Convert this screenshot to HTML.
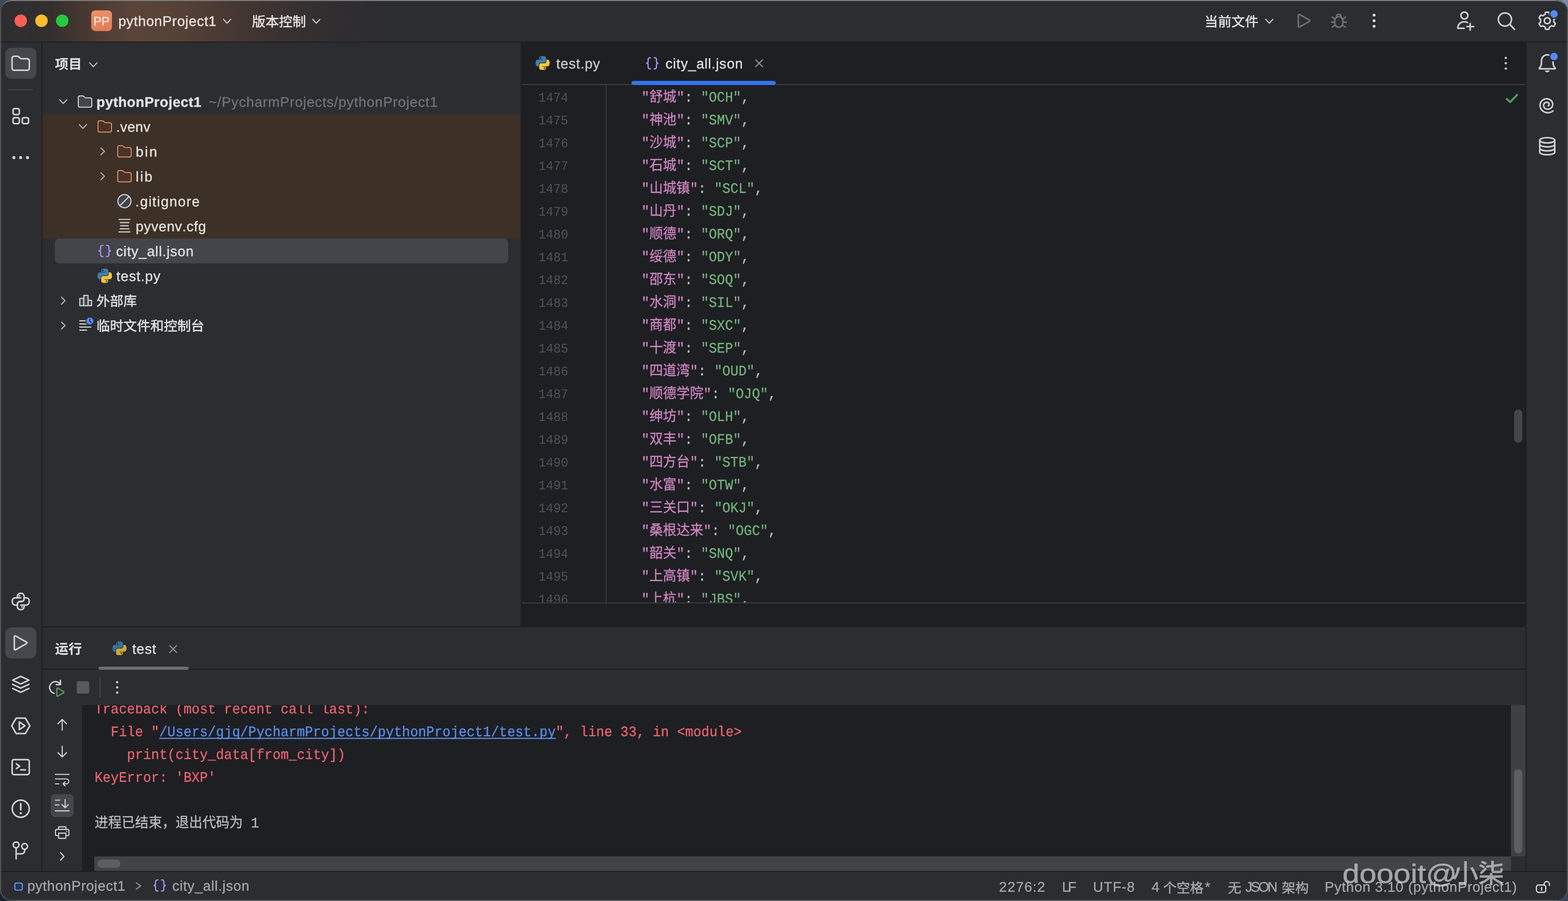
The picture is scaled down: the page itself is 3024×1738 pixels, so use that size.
<!DOCTYPE html>
<html lang="zh"><head><meta charset="utf-8"><title>pythonProject1 – city_all.json</title>
<style>
html,body{margin:0;padding:0;background:#15171a}
body{width:3024px;height:1738px;position:relative;overflow:hidden;font-family:"Liberation Sans","Noto Sans CJK SC",sans-serif;font-kerning:none;text-rendering:geometricPrecision;-webkit-font-smoothing:antialiased}
.a{position:absolute;display:block}
.t{position:absolute;white-space:pre;-webkit-text-stroke:0.35px}
svg text{font-family:"Liberation Sans","Noto Sans CJK SC",sans-serif}
#win{position:absolute;left:0;top:0;width:3024px;height:1738px;border-radius:22px;overflow:hidden;background:#2b2d30;will-change:transform}
#win:after{content:"";position:absolute;left:0;top:0;right:0;bottom:0;border-radius:22px;border:2px solid #56575b;border-top-color:#7c7b7c;pointer-events:none;z-index:50}
#titlebar{background:linear-gradient(90deg,#2e2e30 0,#342f2e 100px,#43372f 150px,#503e35 200px,#5a4439 260px,#574237 330px,#4e3c34 400px,#423531 480px,#383131 560px,#312e30 640px,#2d2d30 720px,#2b2d30 800px)}
.cl,.ln{position:absolute;white-space:pre;font-family:"Liberation Mono","Noto Sans CJK SC",monospace;font-size:26px;line-height:44px;transform:scaleY(1.065)}
.cl{color:#bcbec4;-webkit-text-stroke:0.3px}
.ln{color:#4d525b;font-size:24px}
.k,.q{color:#cf86c3}.s{color:#73b27d}.p{color:#bcbec4}
.lk{color:#5a8ff0;text-decoration:underline;text-decoration-thickness:1.6px;text-underline-offset:2.5px;text-decoration-skip-ink:none}
</style></head>
<body>
<div class="a" style="left:0px;top:0px;width:40px;height:40px;background:#3b4a56;"></div>
<div class="a" style="left:2984px;top:0px;width:40px;height:40px;background:#7f88a3;"></div>
<div class="a" style="left:0px;top:1698px;width:40px;height:40px;background:#1a222e;"></div>
<div class="a" style="left:2984px;top:1698px;width:40px;height:40px;background:#3a4757;"></div>
<div id="win">
<div class="a" id="titlebar" style="left:0;top:0;width:3024px;height:80px"></div>
<div class="a" style="left:28px;top:28px;width:24px;height:24px;border-radius:50%;background:#fe5f57"></div>
<div class="a" style="left:68px;top:28px;width:24px;height:24px;border-radius:50%;background:#febc2e"></div>
<div class="a" style="left:108px;top:28px;width:24px;height:24px;border-radius:50%;background:#28c840"></div>
<div class="a" style="left:176px;top:20px;width:40px;height:40px;border-radius:8px;background:linear-gradient(170deg,#ee9169 0%,#e8855f 50%,#e07a59 100%)"></div>
<div class="t" style="left:180.37px;top:25.35px;font-size:23.5px;line-height:33px;color:#fbeee8;letter-spacing:-0.382px;-webkit-text-stroke:0.1px;">PP</div>
<div class="t" style="left:228.16px;top:22.14px;font-size:27px;line-height:38px;color:#ebe5e1;letter-spacing:0.680px;">pythonProject1</div>
<svg class="a" style="left:426px;top:28.5px;" width="24" height="24" viewBox="0 0 24 24"><path d="M5 8.2L12 15.8L19 8.2" fill="none" stroke="#c3c5cb" stroke-width="2.2" stroke-linecap="round" stroke-linejoin="round" /></svg>
<svg class="a" style="left:485.60px;top:27.72px;overflow:visible" width="104.00" height="28.60" viewBox="0 0 104.00 28.60" fill="#e7e3e2" stroke="#e7e3e2" stroke-width="0.5"><text x="0" y="22.88" font-size="26">版本控制</text></svg>
<svg class="a" style="left:598px;top:28.5px;" width="24" height="24" viewBox="0 0 24 24"><path d="M5 8.2L12 15.8L19 8.2" fill="none" stroke="#c3c5cb" stroke-width="2.2" stroke-linecap="round" stroke-linejoin="round" /></svg>
<svg class="a" style="left:2323.20px;top:27.52px;overflow:visible" width="104.00" height="28.60" viewBox="0 0 104.00 28.60" fill="#dfe1e5" stroke="#dfe1e5" stroke-width="0.5"><text x="0" y="22.88" font-size="26">当前文件</text></svg>
<svg class="a" style="left:2436px;top:29px;" width="24" height="24" viewBox="0 0 24 24"><path d="M5 8.2L12 15.8L19 8.2" fill="none" stroke="#c3c5cb" stroke-width="2.2" stroke-linecap="round" stroke-linejoin="round" /></svg>
<svg class="a" style="left:2494px;top:20px;" width="40" height="40" viewBox="0 0 40 40"><path d="M9.900 9.400c0-1.200 1.300-1.900 2.300-1.300l19.200 10.600c1 .6 1 2 0 2.600L12.200 31.900c-1 .6-2.300-.100-2.300-1.300z" fill="none" stroke="#6c6e75" stroke-width="3" stroke-linecap="round" stroke-linejoin="round" /></svg>
<svg class="a" style="left:2562px;top:20px;" width="40" height="40" viewBox="0 0 40 40"><ellipse cx="20" cy="22.300" rx="8.300" ry="10.300" fill="none" stroke="#6c6e75" stroke-width="3" stroke-linecap="round" stroke-linejoin="round" /><path d="M15.200 12.800a4.800 5.400 0 0 1 9.600 0" fill="none" stroke="#6c6e75" stroke-width="3" stroke-linecap="round" stroke-linejoin="round" /><path d="M12.400 16.400L7.400 13.200M12 22.800H5.800M12.600 29L7.400 32.200M27.600 16.400L32.600 13.200M28 22.800H34.200M27.400 29L32.600 32.200" fill="none" stroke="#6c6e75" stroke-width="3" stroke-linecap="round" stroke-linejoin="round" /></svg>
<svg class="a" style="left:2640px;top:20px;" width="20" height="40" viewBox="0 0 20 40"><circle cx="10" cy="9.2" r="2.7" fill="#dfe1e5"/><circle cx="10" cy="20" r="2.7" fill="#dfe1e5"/><circle cx="10" cy="30.8" r="2.7" fill="#dfe1e5"/></svg>
<svg class="a" style="left:2808px;top:20px;" width="44" height="44" viewBox="0 0 44 44"><circle cx="16.200" cy="9.900" r="6.700" fill="none" stroke="#ced0d6" stroke-width="3" stroke-linecap="round" stroke-linejoin="round" /><path d="M15.700 34.400H3.400c0-7.400 5.600-12.400 12.800-12.400 2.200 0 4.200.500 5.800 1.400" fill="none" stroke="#ced0d6" stroke-width="3" stroke-linecap="round" stroke-linejoin="round" /><path d="M20.900 31.300H34.100M27.300 25.200V37.900" fill="none" stroke="#ced0d6" stroke-width="3" stroke-linecap="round" stroke-linejoin="round" /></svg>
<svg class="a" style="left:2887.8px;top:23.1px;" width="40" height="40" viewBox="0 0 40 40"><circle cx="14.400" cy="14.600" r="12.700" fill="none" stroke="#ced0d6" stroke-width="3" stroke-linecap="round" stroke-linejoin="round" /><path d="M23.800 24L32.800 33.600" fill="none" stroke="#ced0d6" stroke-width="3.2" stroke-linecap="round" stroke-linejoin="round" /></svg>
<svg class="a" style="left:2962px;top:18px;" width="48" height="44" viewBox="0 0 48 44"><path d="M34.80 22.00L34.80 22.22L34.79 22.45L34.78 22.67L34.77 22.89L34.75 23.12L34.73 23.34L34.70 23.56L34.68 23.78L34.64 24.00L34.61 24.22L34.68 24.47L34.90 24.74L35.25 25.06L35.70 25.42L36.20 25.80L36.69 26.21L37.11 26.62L37.42 27.01L37.58 27.37L37.59 27.68L37.50 27.95L37.39 28.22L37.28 28.49L37.16 28.75L37.04 29.02L36.92 29.28L36.79 29.54L36.66 29.79L36.52 30.05L36.38 30.30L36.23 30.55L36.08 30.80L35.92 31.04L35.76 31.28L35.60 31.52L35.43 31.76L35.26 31.99L35.08 32.22L34.90 32.45L34.71 32.67L34.44 32.81L34.05 32.85L33.56 32.78L32.99 32.62L32.39 32.39L31.81 32.15L31.27 31.94L30.82 31.80L30.48 31.75L30.23 31.81L30.06 31.95L29.88 32.09L29.70 32.22L29.52 32.36L29.34 32.49L29.16 32.61L28.97 32.73L28.78 32.86L28.59 32.97L28.40 33.09L28.21 33.20L28.01 33.30L27.81 33.40L27.61 33.50L27.41 33.60L27.21 33.69L27.00 33.78L26.79 33.87L26.59 33.95L26.38 34.03L26.21 34.22L26.07 34.54L25.97 35.00L25.89 35.57L25.80 36.20L25.70 36.83L25.56 37.40L25.37 37.86L25.14 38.18L24.88 38.34L24.60 38.40L24.31 38.44L24.02 38.48L23.74 38.51L23.45 38.54L23.16 38.56L22.87 38.58L22.58 38.59L22.29 38.60L22.00 38.60L21.71 38.60L21.42 38.59L21.13 38.58L20.84 38.56L20.55 38.54L20.26 38.51L19.98 38.48L19.69 38.44L19.40 38.40L19.12 38.34L18.86 38.18L18.63 37.86L18.44 37.40L18.30 36.83L18.20 36.20L18.11 35.57L18.03 35.00L17.93 34.54L17.79 34.22L17.62 34.03L17.41 33.95L17.21 33.87L17.00 33.78L16.79 33.69L16.59 33.60L16.39 33.50L16.19 33.40L15.99 33.30L15.79 33.20L15.60 33.09L15.41 32.97L15.22 32.86L15.03 32.73L14.84 32.61L14.66 32.49L14.48 32.36L14.30 32.22L14.12 32.09L13.94 31.95L13.77 31.81L13.52 31.75L13.18 31.80L12.73 31.94L12.19 32.15L11.61 32.39L11.01 32.62L10.44 32.78L9.95 32.85L9.56 32.81L9.29 32.67L9.10 32.45L8.92 32.22L8.74 31.99L8.57 31.76L8.40 31.52L8.24 31.28L8.08 31.04L7.92 30.80L7.77 30.55L7.62 30.30L7.48 30.05L7.34 29.79L7.21 29.54L7.08 29.28L6.96 29.02L6.84 28.75L6.72 28.49L6.61 28.22L6.50 27.95L6.41 27.68L6.42 27.37L6.58 27.01L6.89 26.62L7.31 26.21L7.80 25.80L8.30 25.42L8.75 25.06L9.10 24.74L9.32 24.47L9.39 24.22L9.36 24.00L9.32 23.78L9.30 23.56L9.27 23.34L9.25 23.12L9.23 22.89L9.22 22.67L9.21 22.45L9.20 22.22L9.20 22.00L9.20 21.78L9.21 21.55L9.22 21.33L9.23 21.11L9.25 20.88L9.27 20.66L9.30 20.44L9.32 20.22L9.36 20.00L9.39 19.78L9.32 19.53L9.10 19.26L8.75 18.94L8.30 18.58L7.80 18.20L7.31 17.79L6.89 17.38L6.58 16.99L6.42 16.63L6.41 16.32L6.50 16.05L6.61 15.78L6.72 15.51L6.84 15.25L6.96 14.98L7.08 14.72L7.21 14.46L7.34 14.21L7.48 13.95L7.62 13.70L7.77 13.45L7.92 13.20L8.08 12.96L8.24 12.72L8.40 12.48L8.57 12.24L8.74 12.01L8.92 11.78L9.10 11.55L9.29 11.33L9.56 11.19L9.95 11.15L10.44 11.22L11.01 11.38L11.61 11.61L12.19 11.85L12.73 12.06L13.18 12.20L13.52 12.25L13.77 12.19L13.94 12.05L14.12 11.91L14.30 11.78L14.48 11.64L14.66 11.51L14.84 11.39L15.03 11.27L15.22 11.14L15.41 11.03L15.60 10.91L15.79 10.80L15.99 10.70L16.19 10.60L16.39 10.50L16.59 10.40L16.79 10.31L17.00 10.22L17.21 10.13L17.41 10.05L17.62 9.97L17.79 9.78L17.93 9.46L18.03 9.00L18.11 8.43L18.20 7.80L18.30 7.17L18.44 6.60L18.63 6.14L18.86 5.82L19.12 5.66L19.40 5.60L19.69 5.56L19.98 5.52L20.26 5.49L20.55 5.46L20.84 5.44L21.13 5.42L21.42 5.41L21.71 5.40L22.00 5.40L22.29 5.40L22.58 5.41L22.87 5.42L23.16 5.44L23.45 5.46L23.74 5.49L24.02 5.52L24.31 5.56L24.60 5.60L24.88 5.66L25.14 5.82L25.37 6.14L25.56 6.60L25.70 7.17L25.80 7.80L25.89 8.43L25.97 9.00L26.07 9.46L26.21 9.78L26.38 9.97L26.59 10.05L26.79 10.13L27.00 10.22L27.21 10.31L27.41 10.40L27.61 10.50L27.81 10.60L28.01 10.70L28.21 10.80L28.40 10.91L28.59 11.03L28.78 11.14L28.97 11.27L29.16 11.39L29.34 11.51L29.52 11.64L29.70 11.78L29.88 11.91L30.06 12.05L30.23 12.19L30.48 12.25L30.82 12.20L31.27 12.06L31.81 11.85L32.39 11.61L32.99 11.38L33.56 11.22L34.05 11.15L34.44 11.19L34.71 11.33L34.90 11.55L35.08 11.78L35.26 12.01L35.43 12.24L35.60 12.48L35.76 12.72L35.92 12.96L36.08 13.20L36.23 13.45L36.38 13.70L36.52 13.95L36.66 14.21L36.79 14.46L36.92 14.72L37.04 14.98L37.16 15.25L37.28 15.51L37.39 15.78L37.50 16.05L37.59 16.32L37.58 16.63L37.42 16.99L37.11 17.38L36.69 17.79L36.20 18.20L35.70 18.58L35.25 18.94L34.90 19.26L34.68 19.53L34.61 19.78L34.64 20.00L34.68 20.22L34.70 20.44L34.73 20.66L34.75 20.88L34.77 21.11L34.78 21.33L34.79 21.55L34.80 21.78Z" fill="none" stroke="#ced0d6" stroke-width="3" stroke-linecap="round" stroke-linejoin="round" /><circle cx="22" cy="22" r="5.800" fill="none" stroke="#ced0d6" stroke-width="3" stroke-linecap="round" stroke-linejoin="round" /><circle cx="35" cy="9" r="9.400" fill="#2b2d30"/><circle cx="35" cy="9" r="7.200" fill="#548af7"/></svg>
<div class="a" style="left:0px;top:80px;width:3024px;height:2px;background:#1e1f22;"></div>
<div class="a" style="left:0px;top:82px;width:80px;height:1598px;background:#2b2d30;"></div>
<div class="a" style="left:80px;top:82px;width:2px;height:1598px;background:#1e1f22;"></div>
<div class="a" style="left:10px;top:92px;width:60px;height:60px;background:#45474c;border-radius:12px"></div>
<svg class="a" style="left:20px;top:102px;" width="40" height="40" viewBox="0 0 40 40"><path d="M3.2 10.4a4 4 0 0 1 4-4h6.2c1.1 0 2.1.4 2.8 1.2l2.4 2.4c.8.8 1.8 1.2 2.8 1.2h11.1a4 4 0 0 1 4 4v14.4a4 4 0 0 1-4 4H7.2a4 4 0 0 1-4-4z" fill="none" stroke="#ced0d6" stroke-width="3" stroke-linecap="round" stroke-linejoin="round" /></svg>
<div class="a" style="left:16px;top:172px;width:48px;height:2px;background:#43454a;"></div>
<svg class="a" style="left:20px;top:204px;" width="40" height="40" viewBox="0 0 40 40"><rect x="5.2" y="5.5" width="12" height="11.6" rx="3" fill="none" stroke="#ced0d6" stroke-width="3" stroke-linecap="round" stroke-linejoin="round" /><rect x="5.2" y="22.9" width="12" height="11.6" rx="3" fill="none" stroke="#ced0d6" stroke-width="3" stroke-linecap="round" stroke-linejoin="round" /><rect x="23" y="22.9" width="12" height="11.6" rx="3" fill="none" stroke="#ced0d6" stroke-width="3" stroke-linecap="round" stroke-linejoin="round" /></svg>
<svg class="a" style="left:20px;top:284px;" width="40" height="40" viewBox="0 0 40 40"><circle cx="6.8" cy="20" r="3" fill="#ced0d6"/><circle cx="19.8" cy="20" r="3" fill="#ced0d6"/><circle cx="33" cy="20" r="3" fill="#ced0d6"/></svg>
<svg class="a" style="left:20px;top:1140px;" width="40" height="40" viewBox="0 0 40 40"><path d="M13.6 13.2V10a5.600 5.600 0 0 1 5.600-5.600h1.600a5.600 5.600 0 0 1 5.600 5.600v5a5.200 5.200 0 0 1-5.200 5.200h-2.400a5.200 5.200 0 0 0-5.200 5.200v1.800H9.400a5.600 5.600 0 0 1-5.600-5.600v-2.800a5.600 5.600 0 0 1 5.600-5.600H20" fill="none" stroke="#ced0d6" stroke-width="3" stroke-linecap="round" stroke-linejoin="round" /><path d="M13.6 13.2V10a5.600 5.600 0 0 1 5.600-5.600h1.600a5.600 5.600 0 0 1 5.600 5.600v5a5.200 5.200 0 0 1-5.200 5.200h-2.400a5.200 5.200 0 0 0-5.200 5.200v1.800H9.400a5.600 5.600 0 0 1-5.600-5.600v-2.800a5.600 5.600 0 0 1 5.600-5.600H20" transform="rotate(180 20 20.2)" fill="none" stroke="#ced0d6" stroke-width="3" stroke-linecap="round" stroke-linejoin="round" /><circle cx="17.6" cy="9.3" r="1.7" fill="#ced0d6"/><circle cx="22.4" cy="31.1" r="1.7" fill="#ced0d6"/></svg>
<div class="a" style="left:10px;top:1210px;width:60px;height:60px;background:#45474c;border-radius:12px"></div>
<svg class="a" style="left:20px;top:1220px;" width="40" height="40" viewBox="0 0 40 40"><path d="M7.6 8.2c0-1.3 1.4-2.1 2.5-1.5l21 11.9c1.1.6 1.1 2.2 0 2.9l-21 11.9c-1.1.6-2.5-.2-2.5-1.5z" fill="none" stroke="#ced0d6" stroke-width="3" stroke-linecap="round" stroke-linejoin="round" /></svg>
<svg class="a" style="left:20px;top:1300px;" width="40" height="40" viewBox="0 0 40 40"><path d="M4.3 12L20 4.7L35.7 12L20 19.3Z" fill="none" stroke="#ced0d6" stroke-width="3" stroke-linecap="round" stroke-linejoin="round" /><path d="M4.3 20L20 27.3L35.7 20" fill="none" stroke="#ced0d6" stroke-width="3" stroke-linecap="round" stroke-linejoin="round" /><path d="M4.3 28L20 35.3L35.7 28" fill="none" stroke="#ced0d6" stroke-width="3" stroke-linecap="round" stroke-linejoin="round" /></svg>
<svg class="a" style="left:20px;top:1380px;" width="40" height="40" viewBox="0 0 40 40"><path d="M2.6 20L11.2 5.2H28.8L37.6 20L28.8 34.9H11.2Z" fill="none" stroke="#ced0d6" stroke-width="3" stroke-linecap="round" stroke-linejoin="round" /><path d="M17.2 12.6L28 20L17.2 27.4Z" fill="none" stroke="#ced0d6" stroke-width="3" stroke-linecap="round" stroke-linejoin="round" /></svg>
<svg class="a" style="left:20px;top:1460px;" width="40" height="40" viewBox="0 0 40 40"><rect x="3.4" y="5.3" width="33" height="29" rx="3.5" fill="none" stroke="#ced0d6" stroke-width="3" stroke-linecap="round" stroke-linejoin="round" /><path d="M11.6 13.4L18 17.9L11.6 22.4" fill="none" stroke="#ced0d6" stroke-width="3" stroke-linecap="round" stroke-linejoin="round" /><path d="M20 25h9" fill="none" stroke="#ced0d6" stroke-width="3" stroke-linecap="round" stroke-linejoin="round" /></svg>
<svg class="a" style="left:20px;top:1540px;" width="40" height="40" viewBox="0 0 40 40"><circle cx="20" cy="20" r="16.4" fill="none" stroke="#ced0d6" stroke-width="3" stroke-linecap="round" stroke-linejoin="round" /><path d="M20 10.5V22" fill="none" stroke="#ced0d6" stroke-width="3.4" stroke-linecap="round" stroke-linejoin="round" /><circle cx="20" cy="28.6" r="2.2" fill="#ced0d6"/></svg>
<svg class="a" style="left:19.6px;top:1620px;" width="40" height="40" viewBox="0 0 40 40"><circle cx="11.1" cy="9.8" r="5.6" fill="none" stroke="#ced0d6" stroke-width="3" stroke-linecap="round" stroke-linejoin="round" /><circle cx="27.5" cy="12.7" r="5.5" fill="none" stroke="#ced0d6" stroke-width="3" stroke-linecap="round" stroke-linejoin="round" /><path d="M11.1 15.6V36.5" fill="none" stroke="#ced0d6" stroke-width="3" stroke-linecap="round" stroke-linejoin="round" /><path d="M27.5 18.4V21a6 6 0 0 1-6 6H11.4" fill="none" stroke="#ced0d6" stroke-width="3" stroke-linecap="round" stroke-linejoin="round" /></svg>
<div class="a" style="left:82px;top:82px;width:922px;height:1126px;background:#2b2d30;"></div>
<svg class="a" style="left:105.70px;top:110.12px;overflow:visible" width="52.00" height="28.60" viewBox="0 0 52.00 28.60" fill="#dfe1e5"><text x="0" y="22.88" font-size="26" font-weight="700">项目</text></svg>
<svg class="a" style="left:168px;top:112.5px;" width="24" height="24" viewBox="0 0 24 24"><path d="M5 8.2L12 15.8L19 8.2" fill="none" stroke="#b4b8bf" stroke-width="2.2" stroke-linecap="round" stroke-linejoin="round" /></svg>
<div class="a" style="left:82px;top:220px;width:922px;height:240px;background:#3d3026;"></div>
<div class="a" style="left:106px;top:460px;width:874px;height:48px;background:#43454a;border-radius:8px"></div>
<svg class="a" style="left:110px;top:184.1px;" width="24" height="24" viewBox="0 0 24 24"><path d="M5 8.2L12 15.8L19 8.2" fill="none" stroke="#b4b8bf" stroke-width="2.2" stroke-linecap="round" stroke-linejoin="round" /></svg>
<svg class="a" style="left:148px;top:180px;" width="32" height="32" viewBox="0 0 32 32"><path d="M3 8a3 3 0 0 1 3-3h5.4c.8 0 1.6.3 2.1.9l2 2c.6.6 1.3.9 2.1.9H26a3 3 0 0 1 3 3v12a3 3 0 0 1-3 3H6a3 3 0 0 1-3-3z" fill="#43454a" stroke="#ced0d6" stroke-width="2" stroke-linejoin="round"/></svg>
<div class="t" style="left:186.12px;top:178.44px;font-size:27px;line-height:38px;color:#dfe1e5;font-weight:700;letter-spacing:0.431px;">pythonProject1</div>
<div class="t" style="left:402.49px;top:178.44px;font-size:27px;line-height:38px;color:#6f737a;letter-spacing:0.855px;">~/PycharmProjects/pythonProject1</div>
<svg class="a" style="left:148.3px;top:232.1px;" width="24" height="24" viewBox="0 0 24 24"><path d="M5 8.2L12 15.8L19 8.2" fill="none" stroke="#b5ada4" stroke-width="2.2" stroke-linecap="round" stroke-linejoin="round" /></svg>
<svg class="a" style="left:186px;top:228px;" width="32" height="32" viewBox="0 0 32 32"><path d="M3 8a3 3 0 0 1 3-3h5.4c.8 0 1.6.3 2.1.9l2 2c.6.6 1.3.9 2.1.9H26a3 3 0 0 1 3 3v12a3 3 0 0 1-3 3H6a3 3 0 0 1-3-3z" fill="#4a3228" stroke="#d48a5f" stroke-width="2" stroke-linejoin="round"/></svg>
<div class="t" style="left:223.93px;top:226.24px;font-size:27px;line-height:38px;color:#e6e2dd;letter-spacing:0.381px;">.venv</div>
<svg class="a" style="left:186px;top:280px;" width="24" height="24" viewBox="0 0 24 24"><path d="M8.6 5.3L15.4 12L8.6 18.7" fill="none" stroke="#b5ada4" stroke-width="2.2" stroke-linecap="round" stroke-linejoin="round" /></svg>
<svg class="a" style="left:224px;top:276px;" width="32" height="32" viewBox="0 0 32 32"><path d="M3 8a3 3 0 0 1 3-3h5.4c.8 0 1.6.3 2.1.9l2 2c.6.6 1.3.9 2.1.9H26a3 3 0 0 1 3 3v12a3 3 0 0 1-3 3H6a3 3 0 0 1-3-3z" fill="#4a3228" stroke="#d48a5f" stroke-width="2" stroke-linejoin="round"/></svg>
<div class="t" style="left:261.76px;top:274.24px;font-size:27px;line-height:38px;color:#e6e2dd;letter-spacing:2.581px;">bin</div>
<svg class="a" style="left:186px;top:328px;" width="24" height="24" viewBox="0 0 24 24"><path d="M8.6 5.3L15.4 12L8.6 18.7" fill="none" stroke="#b5ada4" stroke-width="2.2" stroke-linecap="round" stroke-linejoin="round" /></svg>
<svg class="a" style="left:224px;top:324px;" width="32" height="32" viewBox="0 0 32 32"><path d="M3 8a3 3 0 0 1 3-3h5.4c.8 0 1.6.3 2.1.9l2 2c.6.6 1.3.9 2.1.9H26a3 3 0 0 1 3 3v12a3 3 0 0 1-3 3H6a3 3 0 0 1-3-3z" fill="#4a3228" stroke="#d48a5f" stroke-width="2" stroke-linejoin="round"/></svg>
<div class="t" style="left:261.68px;top:322.24px;font-size:27px;line-height:38px;color:#e6e2dd;letter-spacing:2.600px;">lib</div>
<svg class="a" style="left:224px;top:372.2px;" width="32" height="32" viewBox="0 0 32 32"><circle cx="16" cy="16" r="12.6" fill="#43454a" stroke="#ced0d6" stroke-width="2.2"/><path d="M7.4 24.600L24.600 7.400" stroke="#ced0d6" stroke-width="2.2"/></svg>
<div class="t" style="left:261.03px;top:370.24px;font-size:27px;line-height:38px;color:#e6e2dd;letter-spacing:1.433px;">.gitignore</div>
<svg class="a" style="left:224px;top:420.6px;" width="32" height="32" viewBox="0 0 32 32"><path d="M5.2 2.3H26.8" fill="none" stroke="#ced0d6" stroke-width="2.1" stroke-linecap="round" stroke-linejoin="round" /><path d="M7.8 8.4H24.8" fill="none" stroke="#ced0d6" stroke-width="2.1" stroke-linecap="round" stroke-linejoin="round" /><path d="M8.4 14.4H23.4" fill="none" stroke="#ced0d6" stroke-width="2.1" stroke-linecap="round" stroke-linejoin="round" /><path d="M7.8 20.4H24.8" fill="none" stroke="#ced0d6" stroke-width="2.1" stroke-linecap="round" stroke-linejoin="round" /><path d="M5.2 26.4H26.8" fill="none" stroke="#ced0d6" stroke-width="2.1" stroke-linecap="round" stroke-linejoin="round" /></svg>
<div class="t" style="left:261.76px;top:418.24px;font-size:27px;line-height:38px;color:#e6e2dd;letter-spacing:0.713px;">pyvenv.cfg</div>
<svg class="a" style="left:186px;top:468.2px;" width="32" height="32" viewBox="0 0 32 32"><path d="M12.5 5.4H11a3 3 0 0 0-3 3v4.2c0 1.9-1.2 3.4-3 3.4 1.8 0 3 1.5 3 3.4v4.4a3 3 0 0 0 3 3h1.5" fill="none" stroke="#a98ff0" stroke-width="2.4" stroke-linecap="round" stroke-linejoin="round" /><path d="M19.5 5.4H21a3 3 0 0 1 3 3v4.2c0 1.9 1.2 3.4 3 3.4-1.8 0-3 1.5-3 3.4v4.4a3 3 0 0 1-3 3h-1.5" fill="none" stroke="#a98ff0" stroke-width="2.4" stroke-linecap="round" stroke-linejoin="round" /></svg>
<div class="t" style="left:223.75px;top:466.24px;font-size:27px;line-height:38px;color:#dfe1e5;letter-spacing:0.837px;">city_all.json</div>
<svg class="a" style="left:186px;top:516.2px;" width="32" height="32" viewBox="0 0 32 32"><path d="M15.9 2.2c-7 0-6.6 3-6.6 3v3.2h6.8v1H6.6S2 8.9 2 16s4 6.800 4 6.800h2.400v-3.300s-.1-4 3.900-4h6.700s3.800.1 3.800-3.700V5.900S23.400 2.200 15.900 2.200z" fill="#3e7fb1"/><path d="M16.1 29.800c7 0 6.600-3 6.600-3v-3.200h-6.800v-1h9.500S30 23.100 30 16s-4-6.800-4-6.800h-2.400v3.300s.1 4-3.900 4H13s-3.800-.1-3.800 3.700v6S8.600 29.800 16.100 29.800z" fill="#f0c53c"/><circle cx="12.2" cy="5.800" r="1.300" fill="#1e1f22"/><circle cx="19.800" cy="26.200" r="1.300" fill="#1e1f22"/></svg>
<div class="t" style="left:224.49px;top:514.24px;font-size:27px;line-height:38px;color:#dfe1e5;letter-spacing:0.854px;">test.py</div>
<svg class="a" style="left:110px;top:568px;" width="24" height="24" viewBox="0 0 24 24"><path d="M8.6 5.3L15.4 12L8.6 18.7" fill="none" stroke="#b4b8bf" stroke-width="2.2" stroke-linecap="round" stroke-linejoin="round" /></svg>
<svg class="a" style="left:148.6px;top:564.2px;" width="32" height="32" viewBox="0 0 32 32"><path d="M4.900 11.500h7.700v14.200H4.900z" fill="#43454a" stroke="#ced0d6" stroke-width="2.2" stroke-linejoin="round"/><path d="M20.800 15.300h6.800v10.400h-6.800z" fill="#43454a" stroke="#ced0d6" stroke-width="2.2" stroke-linejoin="round"/><path d="M12.600 5.800h8.200v19.900h-8.200z" fill="#43454a" stroke="#ced0d6" stroke-width="2.2" stroke-linejoin="round"/></svg>
<svg class="a" style="left:185.50px;top:567.42px;overflow:visible" width="78.00" height="28.60" viewBox="0 0 78.00 28.60" fill="#dfe1e5" stroke="#dfe1e5" stroke-width="0.5"><text x="0" y="22.88" font-size="26">外部库</text></svg>
<svg class="a" style="left:110px;top:616px;" width="24" height="24" viewBox="0 0 24 24"><path d="M8.6 5.3L15.4 12L8.6 18.7" fill="none" stroke="#b4b8bf" stroke-width="2.2" stroke-linecap="round" stroke-linejoin="round" /></svg>
<svg class="a" style="left:148.6px;top:612px;" width="32" height="32" viewBox="0 0 32 32"><path d="M4.8 6.9H16" fill="none" stroke="#ced0d6" stroke-width="2.2" stroke-linecap="round" stroke-linejoin="round" /><path d="M4.8 12.9H17.4" fill="none" stroke="#ced0d6" stroke-width="2.2" stroke-linecap="round" stroke-linejoin="round" /><path d="M4.8 18.9H26.2" fill="none" stroke="#ced0d6" stroke-width="2.2" stroke-linecap="round" stroke-linejoin="round" /><path d="M4.8 24.9H18" fill="none" stroke="#ced0d6" stroke-width="2.2" stroke-linecap="round" stroke-linejoin="round" /><circle cx="24.400" cy="7.200" r="8.600" fill="#2b2d30"/><circle cx="24.400" cy="7.200" r="6.800" fill="#548af7"/><path d="M24.200 3.600v4l2.500 2.300" fill="none" stroke="#1e1f22" stroke-width="1.700" stroke-linecap="round" stroke-linejoin="round"/></svg>
<svg class="a" style="left:185.50px;top:615.42px;overflow:visible" width="208.00" height="28.60" viewBox="0 0 208.00 28.60" fill="#dfe1e5" stroke="#dfe1e5" stroke-width="0.5"><text x="0" y="22.88" font-size="26">临时文件和控制台</text></svg>
<div class="a" style="left:1004px;top:82px;width:1940px;height:1126px;background:#1e1f22;"></div>
<svg class="a" style="left:1030.5px;top:106.4px;" width="31" height="31" viewBox="0 0 32 32"><path d="M15.9 2.2c-7 0-6.6 3-6.6 3v3.2h6.8v1H6.6S2 8.9 2 16s4 6.800 4 6.800h2.400v-3.300s-.1-4 3.900-4h6.700s3.800.1 3.800-3.700V5.900S23.400 2.200 15.900 2.200z" fill="#3e7fb1"/><path d="M16.1 29.800c7 0 6.600-3 6.600-3v-3.200h-6.800v-1h9.500S30 23.100 30 16s-4-6.800-4-6.800h-2.400v3.300s.1 4-3.900 4H13s-3.800-.1-3.800 3.700v6S8.600 29.800 16.100 29.800z" fill="#f0c53c"/><circle cx="12.2" cy="5.800" r="1.300" fill="#1e1f22"/><circle cx="19.800" cy="26.200" r="1.300" fill="#1e1f22"/></svg>
<div class="t" style="left:1072.79px;top:104.24px;font-size:27px;line-height:38px;color:#c9cbd1;letter-spacing:0.771px;">test.py</div>
<svg class="a" style="left:1242px;top:106.2px;" width="32" height="32" viewBox="0 0 32 32"><path d="M12.5 5.4H11a3 3 0 0 0-3 3v4.2c0 1.9-1.2 3.4-3 3.4 1.8 0 3 1.5 3 3.4v4.4a3 3 0 0 0 3 3h1.5" fill="none" stroke="#a98ff0" stroke-width="2.4" stroke-linecap="round" stroke-linejoin="round" /><path d="M19.5 5.4H21a3 3 0 0 1 3 3v4.2c0 1.9 1.2 3.4 3 3.4-1.8 0-3 1.5-3 3.4v4.4a3 3 0 0 1-3 3h-1.5" fill="none" stroke="#a98ff0" stroke-width="2.4" stroke-linecap="round" stroke-linejoin="round" /></svg>
<div class="t" style="left:1283.55px;top:104.24px;font-size:27px;line-height:38px;color:#dfe1e5;letter-spacing:0.778px;">city_all.json</div>
<svg class="a" style="left:1454px;top:112.3px;" width="20" height="20" viewBox="0 0 20 20"><path d="M3.4 3.4L16.6 16.6M16.6 3.4L3.4 16.6" fill="none" stroke="#868a91" stroke-width="2.2" stroke-linecap="round" stroke-linejoin="round" /></svg>
<div class="a" style="left:1006px;top:162px;width:1936px;height:1.6px;background:#393b40;"></div>
<div class="a" style="left:1218px;top:156.3px;width:278px;height:7.4px;background:#3574f0;border-radius:4px"></div>
<svg class="a" style="left:2894px;top:102.3px;" width="20" height="40" viewBox="0 0 20 40"><circle cx="10" cy="9.8" r="2.2" fill="#ced0d6"/><circle cx="10" cy="20" r="2.2" fill="#ced0d6"/><circle cx="10" cy="30.2" r="2.2" fill="#ced0d6"/></svg>
<svg class="a" style="left:2899.6px;top:178.4px;" width="32" height="24" viewBox="0 0 32 24"><path d="M5.800 12.800L12.400 18.800L25.800 5.200" fill="none" stroke="#57965c" stroke-width="4" stroke-linecap="round" stroke-linejoin="round" /></svg>
<div class="a" style="left:1168.2px;top:163.6px;width:1.7px;height:999px;background:#35373c;"></div>
<div class="a" style="left:1006px;top:1162px;width:1936px;height:1.6px;background:#393b40;"></div>
<div class="a" style="left:2920px;top:790px;width:16px;height:64px;background:#44464a;border-radius:8px"></div>
<div class="a" id="code" style="left:1004px;top:163.6px;width:1938px;height:998.4px;overflow:hidden">
<div class="cl" style="left:170.50px;top:3.68px;transform-origin:0 28.92px">    <span class="k"><span class="q">"</span>舒城<span class="q">"</span></span><span class="p">: </span><span class="s">"OCH"</span><span class="p">,</span></div>
<div class="ln" style="left:34.40px;top:5.11px;transform-origin:0 28.39px">1474</div>
<div class="cl" style="left:170.50px;top:47.68px;transform-origin:0 28.92px">    <span class="k"><span class="q">"</span>神池<span class="q">"</span></span><span class="p">: </span><span class="s">"SMV"</span><span class="p">,</span></div>
<div class="ln" style="left:34.40px;top:49.11px;transform-origin:0 28.39px">1475</div>
<div class="cl" style="left:170.50px;top:91.68px;transform-origin:0 28.92px">    <span class="k"><span class="q">"</span>沙城<span class="q">"</span></span><span class="p">: </span><span class="s">"SCP"</span><span class="p">,</span></div>
<div class="ln" style="left:34.40px;top:93.11px;transform-origin:0 28.39px">1476</div>
<div class="cl" style="left:170.50px;top:135.68px;transform-origin:0 28.92px">    <span class="k"><span class="q">"</span>石城<span class="q">"</span></span><span class="p">: </span><span class="s">"SCT"</span><span class="p">,</span></div>
<div class="ln" style="left:34.40px;top:137.11px;transform-origin:0 28.39px">1477</div>
<div class="cl" style="left:170.50px;top:179.68px;transform-origin:0 28.92px">    <span class="k"><span class="q">"</span>山城镇<span class="q">"</span></span><span class="p">: </span><span class="s">"SCL"</span><span class="p">,</span></div>
<div class="ln" style="left:34.40px;top:181.11px;transform-origin:0 28.39px">1478</div>
<div class="cl" style="left:170.50px;top:223.68px;transform-origin:0 28.92px">    <span class="k"><span class="q">"</span>山丹<span class="q">"</span></span><span class="p">: </span><span class="s">"SDJ"</span><span class="p">,</span></div>
<div class="ln" style="left:34.40px;top:225.11px;transform-origin:0 28.39px">1479</div>
<div class="cl" style="left:170.50px;top:267.68px;transform-origin:0 28.92px">    <span class="k"><span class="q">"</span>顺德<span class="q">"</span></span><span class="p">: </span><span class="s">"ORQ"</span><span class="p">,</span></div>
<div class="ln" style="left:34.40px;top:269.11px;transform-origin:0 28.39px">1480</div>
<div class="cl" style="left:170.50px;top:311.68px;transform-origin:0 28.92px">    <span class="k"><span class="q">"</span>绥德<span class="q">"</span></span><span class="p">: </span><span class="s">"ODY"</span><span class="p">,</span></div>
<div class="ln" style="left:34.40px;top:313.11px;transform-origin:0 28.39px">1481</div>
<div class="cl" style="left:170.50px;top:355.68px;transform-origin:0 28.92px">    <span class="k"><span class="q">"</span>邵东<span class="q">"</span></span><span class="p">: </span><span class="s">"SOQ"</span><span class="p">,</span></div>
<div class="ln" style="left:34.40px;top:357.11px;transform-origin:0 28.39px">1482</div>
<div class="cl" style="left:170.50px;top:399.68px;transform-origin:0 28.92px">    <span class="k"><span class="q">"</span>水洞<span class="q">"</span></span><span class="p">: </span><span class="s">"SIL"</span><span class="p">,</span></div>
<div class="ln" style="left:34.40px;top:401.11px;transform-origin:0 28.39px">1483</div>
<div class="cl" style="left:170.50px;top:443.68px;transform-origin:0 28.92px">    <span class="k"><span class="q">"</span>商都<span class="q">"</span></span><span class="p">: </span><span class="s">"SXC"</span><span class="p">,</span></div>
<div class="ln" style="left:34.40px;top:445.11px;transform-origin:0 28.39px">1484</div>
<div class="cl" style="left:170.50px;top:487.68px;transform-origin:0 28.92px">    <span class="k"><span class="q">"</span>十渡<span class="q">"</span></span><span class="p">: </span><span class="s">"SEP"</span><span class="p">,</span></div>
<div class="ln" style="left:34.40px;top:489.11px;transform-origin:0 28.39px">1485</div>
<div class="cl" style="left:170.50px;top:531.68px;transform-origin:0 28.92px">    <span class="k"><span class="q">"</span>四道湾<span class="q">"</span></span><span class="p">: </span><span class="s">"OUD"</span><span class="p">,</span></div>
<div class="ln" style="left:34.40px;top:533.11px;transform-origin:0 28.39px">1486</div>
<div class="cl" style="left:170.50px;top:575.68px;transform-origin:0 28.92px">    <span class="k"><span class="q">"</span>顺德学院<span class="q">"</span></span><span class="p">: </span><span class="s">"OJQ"</span><span class="p">,</span></div>
<div class="ln" style="left:34.40px;top:577.11px;transform-origin:0 28.39px">1487</div>
<div class="cl" style="left:170.50px;top:619.68px;transform-origin:0 28.92px">    <span class="k"><span class="q">"</span>绅坊<span class="q">"</span></span><span class="p">: </span><span class="s">"OLH"</span><span class="p">,</span></div>
<div class="ln" style="left:34.40px;top:621.11px;transform-origin:0 28.39px">1488</div>
<div class="cl" style="left:170.50px;top:663.68px;transform-origin:0 28.92px">    <span class="k"><span class="q">"</span>双丰<span class="q">"</span></span><span class="p">: </span><span class="s">"OFB"</span><span class="p">,</span></div>
<div class="ln" style="left:34.40px;top:665.11px;transform-origin:0 28.39px">1489</div>
<div class="cl" style="left:170.50px;top:707.68px;transform-origin:0 28.92px">    <span class="k"><span class="q">"</span>四方台<span class="q">"</span></span><span class="p">: </span><span class="s">"STB"</span><span class="p">,</span></div>
<div class="ln" style="left:34.40px;top:709.11px;transform-origin:0 28.39px">1490</div>
<div class="cl" style="left:170.50px;top:751.68px;transform-origin:0 28.92px">    <span class="k"><span class="q">"</span>水富<span class="q">"</span></span><span class="p">: </span><span class="s">"OTW"</span><span class="p">,</span></div>
<div class="ln" style="left:34.40px;top:753.11px;transform-origin:0 28.39px">1491</div>
<div class="cl" style="left:170.50px;top:795.68px;transform-origin:0 28.92px">    <span class="k"><span class="q">"</span>三关口<span class="q">"</span></span><span class="p">: </span><span class="s">"OKJ"</span><span class="p">,</span></div>
<div class="ln" style="left:34.40px;top:797.11px;transform-origin:0 28.39px">1492</div>
<div class="cl" style="left:170.50px;top:839.68px;transform-origin:0 28.92px">    <span class="k"><span class="q">"</span>桑根达来<span class="q">"</span></span><span class="p">: </span><span class="s">"OGC"</span><span class="p">,</span></div>
<div class="ln" style="left:34.40px;top:841.11px;transform-origin:0 28.39px">1493</div>
<div class="cl" style="left:170.50px;top:883.68px;transform-origin:0 28.92px">    <span class="k"><span class="q">"</span>韶关<span class="q">"</span></span><span class="p">: </span><span class="s">"SNQ"</span><span class="p">,</span></div>
<div class="ln" style="left:34.40px;top:885.11px;transform-origin:0 28.39px">1494</div>
<div class="cl" style="left:170.50px;top:927.68px;transform-origin:0 28.92px">    <span class="k"><span class="q">"</span>上高镇<span class="q">"</span></span><span class="p">: </span><span class="s">"SVK"</span><span class="p">,</span></div>
<div class="ln" style="left:34.40px;top:929.11px;transform-origin:0 28.39px">1495</div>
<div class="cl" style="left:170.50px;top:971.68px;transform-origin:0 28.92px">    <span class="k"><span class="q">"</span>上杭<span class="q">"</span></span><span class="p">: </span><span class="s">"JBS"</span><span class="p">,</span></div>
<div class="ln" style="left:34.40px;top:973.11px;transform-origin:0 28.39px">1496</div>
</div>
<div class="a" style="left:82px;top:1208px;width:2862px;height:2px;background:#1e1f22;"></div>
<div class="a" style="left:82px;top:1210px;width:2860px;height:80px;background:#2b2d30;"></div>
<svg class="a" style="left:106.00px;top:1238.32px;overflow:visible" width="52.00" height="28.60" viewBox="0 0 52.00 28.60" fill="#dfe1e5"><text x="0" y="22.88" font-size="26" font-weight="700">运行</text></svg>
<svg class="a" style="left:215px;top:1234.6px;opacity:0.82" width="31" height="31" viewBox="0 0 32 32"><path d="M15.9 2.2c-7 0-6.6 3-6.6 3v3.2h6.8v1H6.6S2 8.9 2 16s4 6.800 4 6.800h2.400v-3.300s-.1-4 3.900-4h6.700s3.800.1 3.800-3.700V5.900S23.400 2.200 15.900 2.200z" fill="#3e7fb1"/><path d="M16.1 29.800c7 0 6.600-3 6.600-3v-3.200h-6.800v-1h9.500S30 23.100 30 16s-4-6.800-4-6.800h-2.400v3.300s.1 4-3.900 4H13s-3.800-.1-3.800 3.700v6S8.600 29.800 16.100 29.800z" fill="#f0c53c"/><circle cx="12.2" cy="5.800" r="1.300" fill="#1e1f22"/><circle cx="19.800" cy="26.200" r="1.300" fill="#1e1f22"/></svg>
<div class="t" style="left:254.89px;top:1232.94px;font-size:27px;line-height:38px;color:#dfe1e5;letter-spacing:0.896px;">test</div>
<svg class="a" style="left:324.2px;top:1242px;" width="20" height="20" viewBox="0 0 20 20"><path d="M3.4 3.4L16.6 16.6M16.6 3.4L3.4 16.6" fill="none" stroke="#868a91" stroke-width="2.2" stroke-linecap="round" stroke-linejoin="round" /></svg>
<div class="a" style="left:82px;top:1290px;width:2860px;height:2px;background:#1e1f22;"></div>
<div class="a" style="left:190px;top:1285.6px;width:174px;height:6px;background:#6b6d72;border-radius:3px"></div>
<div class="a" style="left:82px;top:1292px;width:2860px;height:68px;background:#2b2d30;"></div>
<svg class="a" style="left:91px;top:1306.6px;" width="40" height="40" viewBox="0 0 40 40"><path d="M13.500 30.400A11.400 11.400 0 1 1 25.800 13.300" fill="none" stroke="#ced0d6" stroke-width="2.6" stroke-linecap="round" stroke-linejoin="round" /><path d="M25.600 5.200V13.600H17.400" fill="none" stroke="#ced0d6" stroke-width="2.6" stroke-linecap="round" stroke-linejoin="round" /><path d="M18.600 21.200c0-.900 1-1.500 1.800-1l11.200 6.800c.800.500.800 1.600 0 2.100L20.400 35.900c-.800.500-1.800-.100-1.800-1z" fill="none" stroke="#57965c" stroke-width="2.6" stroke-linecap="round" stroke-linejoin="round" /></svg>
<div class="a" style="left:148px;top:1314px;width:24px;height:24px;background:#595a5e;border-radius:4px"></div>
<div class="a" style="left:192.4px;top:1307px;width:1.8px;height:39px;background:#43454a;"></div>
<svg class="a" style="left:216px;top:1306px;" width="20" height="40" viewBox="0 0 20 40"><circle cx="10" cy="10" r="2.3" fill="#ced0d6"/><circle cx="10" cy="20" r="2.3" fill="#ced0d6"/><circle cx="10" cy="30" r="2.3" fill="#ced0d6"/></svg>
<div class="a" style="left:82px;top:1360px;width:76px;height:320px;background:#2b2d30;"></div>
<svg class="a" style="left:104px;top:1382px;" width="32" height="32" viewBox="0 0 32 32"><g transform="translate(16 16) scale(0.94) translate(-16 -16)"><path d="M16 27.400V5.400M7.200 14L16 5.200L24.800 14" fill="none" stroke="#ced0d6" stroke-width="2.3" stroke-linecap="round" stroke-linejoin="round" /></g></svg>
<svg class="a" style="left:104px;top:1434px;" width="32" height="32" viewBox="0 0 32 32"><g transform="translate(16 16) scale(0.94) translate(-16 -16)"><path d="M16 4.600V26.600M7.200 18L16 26.800L24.800 18" fill="none" stroke="#ced0d6" stroke-width="2.3" stroke-linecap="round" stroke-linejoin="round" /></g></svg>
<svg class="a" style="left:104px;top:1487.5px;" width="32" height="33" viewBox="0 0 32 33"><g transform="translate(16 16) scale(0.94) translate(-16 -16)"><path d="M2 5H30M2 14.500H24.500a5 5 0 0 1 0 10H18M2 24.500H9" fill="none" stroke="#ced0d6" stroke-width="2.2" stroke-linecap="round" stroke-linejoin="round" /><path d="M22 20.300L17.600 24.500L22 28.700" fill="none" stroke="#ced0d6" stroke-width="2.2" stroke-linecap="round" stroke-linejoin="round" /></g></svg>
<div class="a" style="left:98px;top:1532px;width:44px;height:44px;background:#45474c;border-radius:8px"></div>
<svg class="a" style="left:104px;top:1538px;" width="32" height="32" viewBox="0 0 32 32"><g transform="translate(16 16) scale(0.94) translate(-16 -16)"><path d="M2 4.800H11M2 14.600H9M2 26.800H30" fill="none" stroke="#ced0d6" stroke-width="2.3" stroke-linecap="round" stroke-linejoin="round" /><path d="M22 3.600V20M15.400 13.800L22 20.400L28.600 13.800" fill="none" stroke="#ced0d6" stroke-width="2.3" stroke-linecap="round" stroke-linejoin="round" /></g></svg>
<svg class="a" style="left:104px;top:1590px;" width="32" height="32" viewBox="0 0 32 32"><g transform="translate(16 16) scale(0.94) translate(-16 -16)"><path d="M8.600 9.500V4.200H23.400V9.500" fill="none" stroke="#ced0d6" stroke-width="2.2" stroke-linecap="round" stroke-linejoin="round" /><path d="M8.400 22.400H5.200a3 3 0 0 1-3-3v-6.900a3 3 0 0 1 3-3H26.800a3 3 0 0 1 3 3v6.900a3 3 0 0 1-3 3H23.600" fill="none" stroke="#ced0d6" stroke-width="2.2" stroke-linecap="round" stroke-linejoin="round" /><rect x="8.600" y="17.200" width="14.800" height="10.600" fill="none" stroke="#ced0d6" stroke-width="2.2" stroke-linecap="round" stroke-linejoin="round" /><circle cx="25.300" cy="13.700" r="1.300" fill="#ced0d6"/></g></svg>
<svg class="a" style="left:108px;top:1640px;" width="24" height="24" viewBox="0 0 24 24"><path d="M8.6 4.6L15.4 12L8.6 19.4" fill="none" stroke="#ced0d6" stroke-width="2.2" stroke-linecap="round" stroke-linejoin="round" /></svg>
<div class="a" style="left:158px;top:1360px;width:2784px;height:320px;background:#1e1f22;"></div>
<div class="a" style="left:2914px;top:1360px;width:28px;height:292px;background:#3f4043;"></div>
<div class="a" style="left:2920px;top:1484px;width:16px;height:162px;background:#5d5e61;border-radius:8px"></div>
<div class="a" style="left:182px;top:1652px;width:2732px;height:28px;background:#424346;"></div>
<div class="a" style="left:188px;top:1658px;width:44px;height:16px;background:#5d5e61;border-radius:8px"></div>
<div class="a" style="left:2914px;top:1652px;width:28px;height:28px;background:#2b2d30;"></div>
<div class="a" id="con" style="left:158px;top:1360px;width:2756px;height:292px;overflow:hidden">
<div class="cl" style="left:24.40px;top:-13.22px;transform-origin:0 28.92px"><span style="color:#ee6373">Traceback (most recent call last):</span></div>
<div class="cl" style="left:24.40px;top:30.78px;transform-origin:0 28.92px"><span style="color:#ee6373">  File "</span><span class="lk">/Users/gjq/PycharmProjects/pythonProject1/test.py</span><span style="color:#ee6373">", line 33, in &lt;module&gt;</span></div>
<div class="cl" style="left:24.40px;top:74.78px;transform-origin:0 28.92px"><span style="color:#ee6373">    print(city_data[from_city])</span></div>
<div class="cl" style="left:24.40px;top:118.78px;transform-origin:0 28.92px"><span style="color:#ee6373">KeyError: 'BXP'</span></div>
<div class="cl" style="left:24.40px;top:206.78px;transform-origin:0 28.92px"><span style="color:#bcbec4">进程已结束，退出代码为 1</span></div>
</div>
<div class="a" style="left:2942px;top:1208px;width:2px;height:472px;background:#1e1f22;"></div>
<div class="a" style="left:2944px;top:82px;width:80px;height:1598px;background:#2b2d30;"></div>
<svg class="a" style="left:2964px;top:102px;" width="44" height="40" viewBox="0 0 44 40"><path d="M4.800 29.300c2.600-2.800 4-5.400 4-10.400v-3.200c0-6.600 4.600-12 11.200-12s11.200 5.400 11.200 12v3.200c0 5 1.400 7.600 4 10.400.5.600.1 1.500-.7 1.500H5.500c-.8 0-1.200-.900-.7-1.500z" fill="none" stroke="#ced0d6" stroke-width="3" stroke-linecap="round" stroke-linejoin="round" /><path d="M15.200 34c1 2.300 2.700 3.500 4.800 3.500s3.800-1.200 4.800-3.500z" fill="#ced0d6"/><circle cx="33" cy="7" r="9.400" fill="#2b2d30"/><circle cx="33" cy="7" r="7.200" fill="#548af7"/></svg>
<svg class="a" style="left:2964px;top:181.6px;" width="40" height="40" viewBox="0 0 40 40"><path d="M30.97 32.00L30.28 32.49L29.57 32.95L28.83 33.37L28.07 33.75L27.30 34.09L26.51 34.39L25.71 34.64L24.90 34.86L24.08 35.03L23.26 35.16L22.43 35.25L21.60 35.30L20.77 35.30L19.95 35.27L19.14 35.19L18.33 35.07L17.53 34.91L16.75 34.71L15.98 34.47L15.23 34.20L14.49 33.89L13.78 33.54L13.09 33.16L12.42 32.74L11.79 32.30L11.17 31.82L10.59 31.32L10.04 30.79L9.52 30.23L9.04 29.65L8.58 29.05L8.17 28.43L7.79 27.79L7.44 27.14L7.14 26.47L6.87 25.79L6.64 25.10L6.45 24.41L6.30 23.70L6.19 23.00L6.12 22.29L6.09 21.58L6.10 20.87L6.14 20.17L6.23 19.48L6.35 18.79L6.51 18.11L6.70 17.45L6.93 16.79L7.19 16.16L7.49 15.54L7.82 14.94L8.19 14.35L8.58 13.79L9.00 13.26L9.44 12.75L9.92 12.26L10.41 11.80L10.93 11.37L11.47 10.96L12.03 10.59L12.61 10.25L13.20 9.93L13.80 9.65L14.42 9.40L15.05 9.19L15.68 9.01L16.32 8.86L16.97 8.74L17.62 8.66L18.26 8.61L18.91 8.59L19.56 8.61L20.20 8.66L20.83 8.74L21.45 8.85L22.07 9.00L22.67 9.17L23.26 9.37L23.84 9.61L24.39 9.87L24.94 10.15L25.46 10.46L25.96 10.80L26.44 11.16L26.89 11.54L27.33 11.94L27.73 12.37L28.12 12.81L28.47 13.26L28.80 13.73L29.10 14.22L29.37 14.71L29.61 15.22L29.83 15.74L30.01 16.26L30.16 16.79L30.28 17.32L30.38 17.86L30.44 18.40L30.47 18.93L30.47 19.47L30.45 20.00L30.39 20.53L30.31 21.05L30.20 21.56L30.06 22.06L29.89 22.55L29.70 23.03L29.48 23.50L29.24 23.95L28.97 24.39L28.69 24.81L28.38 25.21L28.05 25.60L27.70 25.96L27.34 26.31L26.96 26.63L26.56 26.93L26.15 27.21L25.73 27.47L25.29 27.70L24.85 27.91L24.40 28.10L23.94 28.26L23.48 28.40L23.01 28.51L22.54 28.60L22.07 28.66L21.60 28.70L21.13 28.71L20.66 28.70L20.20 28.67L19.75 28.61L19.30 28.53L18.85 28.43L18.42 28.31L18.00 28.16L17.59 28.00L17.19 27.81L16.80 27.61L16.43 27.39L16.08 27.15L15.74 26.90L15.42 26.63L15.11 26.34L14.83 26.05L14.56 25.74L14.31 25.42L14.08 25.09L13.87 24.75L13.69 24.40L13.52 24.05L13.37 23.69L13.25 23.33L13.15 22.96L13.07 22.60L13.01 22.23L12.97 21.86L12.95 21.49L12.95 21.13L12.97 20.77L13.01 20.41L13.07 20.06L13.15 19.72L13.25 19.38L13.37 19.05L13.50 18.73L13.65 18.42L13.82 18.12L14.00 17.84L14.19 17.56L14.40 17.30L14.62 17.05L14.86 16.82L15.10 16.60L15.35 16.39L15.61 16.20L15.88 16.03L16.16 15.87L16.44 15.72L16.73 15.60L17.02 15.48L17.32 15.39L17.61 15.31L17.91 15.25L18.21 15.20L18.51 15.17L18.80 15.16L19.09 15.16L19.38 15.18L19.67 15.21L19.95 15.25L20.22 15.31L20.49 15.39L20.75 15.47L21.00 15.57L21.24 15.68L21.48 15.80L21.70 15.94L21.91 16.08L22.12 16.23L22.31 16.39L22.49 16.56L22.65 16.74L22.81 16.92L22.95 17.11L23.08 17.30L23.20 17.50L23.30 17.70L23.40 17.90L23.47 18.11L23.54 18.31L23.59 18.52L23.63 18.73L23.66 18.93L23.68 19.13L23.68 19.34L23.67 19.54L23.65 19.73L23.62 19.92L23.58 20.11L23.52 20.29L23.46 20.46L23.39 20.63L23.31 20.79L23.22 20.95L23.13 21.10L23.02 21.24L22.91 21.37L22.80 21.49L22.68 21.61L22.55 21.71L22.42 21.81L22.29 21.90L22.16 21.97L22.02 22.04L21.88 22.10L21.74 22.15" fill="none" stroke="#ced0d6" stroke-width="3" stroke-linecap="round" stroke-linejoin="round" /></svg>
<svg class="a" style="left:2964px;top:262px;" width="40" height="40" viewBox="0 0 40 40"><ellipse cx="20" cy="8.600" rx="14.500" ry="5.200" fill="none" stroke="#ced0d6" stroke-width="3" stroke-linecap="round" stroke-linejoin="round" /><path d="M5.500 8.600V31.400c0 2.900 6.500 5.200 14.500 5.200s14.500-2.300 14.500-5.200V8.600" fill="none" stroke="#ced0d6" stroke-width="3" stroke-linecap="round" stroke-linejoin="round" /><path d="M5.500 16.200c0 2.900 6.500 5.200 14.500 5.200s14.500-2.300 14.500-5.200M5.500 23.800c0 2.900 6.500 5.200 14.500 5.200s14.500-2.300 14.500-5.200" fill="none" stroke="#ced0d6" stroke-width="3" stroke-linecap="round" stroke-linejoin="round" /></svg>
<div class="a" style="left:0px;top:1680px;width:3024px;height:2px;background:#1e1f22;"></div>
<div class="a" style="left:0px;top:1682px;width:3024px;height:56px;background:#2b2d30;"></div>
<svg class="a" style="left:26px;top:1700px;" width="20" height="20" viewBox="0 0 20 20"><rect x="2.600" y="3.400" width="14.400" height="13.600" rx="3" fill="#25324d" stroke="#6a90f0" stroke-width="2.2"/></svg>
<div class="t" style="left:52.66px;top:1690.14px;font-size:27px;line-height:38px;color:#a3a6ad;letter-spacing:0.680px;">pythonProject1</div>
<svg class="a" style="left:255px;top:1697.4px;" width="24" height="24" viewBox="0 0 24 24"><path d="M7.8 5.8L16.2 12L7.8 18.2" fill="none" stroke="#8b8e96" stroke-width="2.2" stroke-linecap="round" stroke-linejoin="round" /></svg>
<svg class="a" style="left:292px;top:1692.3px;" width="32" height="32" viewBox="0 0 32 32"><path d="M12.5 5.4H11a3 3 0 0 0-3 3v4.2c0 1.9-1.2 3.4-3 3.4 1.8 0 3 1.5 3 3.4v4.4a3 3 0 0 0 3 3h1.5" fill="none" stroke="#a98ff0" stroke-width="2.4" stroke-linecap="round" stroke-linejoin="round" /><path d="M19.5 5.4H21a3 3 0 0 1 3 3v4.2c0 1.9 1.2 3.4 3 3.4-1.8 0-3 1.5-3 3.4v4.4a3 3 0 0 1-3 3h-1.5" fill="none" stroke="#a98ff0" stroke-width="2.4" stroke-linecap="round" stroke-linejoin="round" /></svg>
<div class="t" style="left:332.15px;top:1690.14px;font-size:27px;line-height:38px;color:#a3a6ad;letter-spacing:0.753px;">city_all.json</div>
<div class="t" style="left:1926.84px;top:1691.84px;font-size:27px;line-height:38px;color:#a3a6ad;letter-spacing:1.227px;">2276:2</div>
<div class="t" style="left:2048.29px;top:1691.84px;font-size:27px;line-height:38px;color:#a3a6ad;letter-spacing:-3.813px;">LF</div>
<div class="t" style="left:2108.12px;top:1691.84px;font-size:27px;line-height:38px;color:#a3a6ad;letter-spacing:0.891px;">UTF-8</div>
<div class="t" style="left:2221.08px;top:1691.84px;font-size:27px;line-height:38px;color:#a3a6ad;">4</div>
<svg class="a" style="left:2243.40px;top:1698.52px;overflow:visible" width="78.00" height="28.60" viewBox="0 0 78.00 28.60" fill="#a3a6ad" stroke="#a3a6ad" stroke-width="0.5"><text x="0" y="22.88" font-size="26">个空格</text></svg>
<div class="t" style="left:2323.76px;top:1691.84px;font-size:27px;line-height:38px;color:#a3a6ad;">*</div>
<svg class="a" style="left:2367.80px;top:1698.52px;overflow:visible" width="26.00" height="28.60" viewBox="0 0 26.00 28.60" fill="#a3a6ad" stroke="#a3a6ad" stroke-width="0.5"><text x="0" y="22.88" font-size="26">无</text></svg>
<div class="t" style="left:2401.78px;top:1691.84px;font-size:27px;line-height:38px;color:#a3a6ad;letter-spacing:-3.228px;">JSON</div>
<svg class="a" style="left:2472.00px;top:1698.52px;overflow:visible" width="52.00" height="28.60" viewBox="0 0 52.00 28.60" fill="#a3a6ad" stroke="#a3a6ad" stroke-width="0.5"><text x="0" y="22.88" font-size="26">架构</text></svg>
<div class="t" style="left:2554.79px;top:1691.84px;font-size:27px;line-height:38px;color:#a3a6ad;letter-spacing:0.773px;">Python 3.10 (pythonProject1)</div>
<svg class="a" style="left:2960.6px;top:1695.8px;" width="32" height="28" viewBox="0 0 32 28"><rect x="2.100" y="11.100" width="18" height="14.200" rx="4" fill="none" stroke="#dfe1e5" stroke-width="2.2" stroke-linecap="round" stroke-linejoin="round" /><path d="M12 16v5" fill="none" stroke="#dfe1e5" stroke-width="2.4" stroke-linecap="round" stroke-linejoin="round" /><path d="M16.800 11V9.600a5.200 5.200 0 0 1 10.400 0V12" fill="none" stroke="#dfe1e5" stroke-width="2.2" stroke-linecap="round" stroke-linejoin="round" /></svg>
<div class="t" style="left:2589.22px;top:1649.72px;font-size:51px;line-height:71px;color:#dedede;transform:scaleX(1.158);transform-origin:0 0;-webkit-text-stroke:0.7px;opacity:0.68;">doooit@</div>
<svg class="a" style="left:2800.80px;top:1658.50px;opacity:0.68;overflow:visible" width="100.00" height="55.00" viewBox="0 0 100.00 55.00" fill="#dedede" stroke="#dedede" stroke-width="1"><text x="0" y="44" font-size="50">小柒</text></svg>
</div>
</body></html>
